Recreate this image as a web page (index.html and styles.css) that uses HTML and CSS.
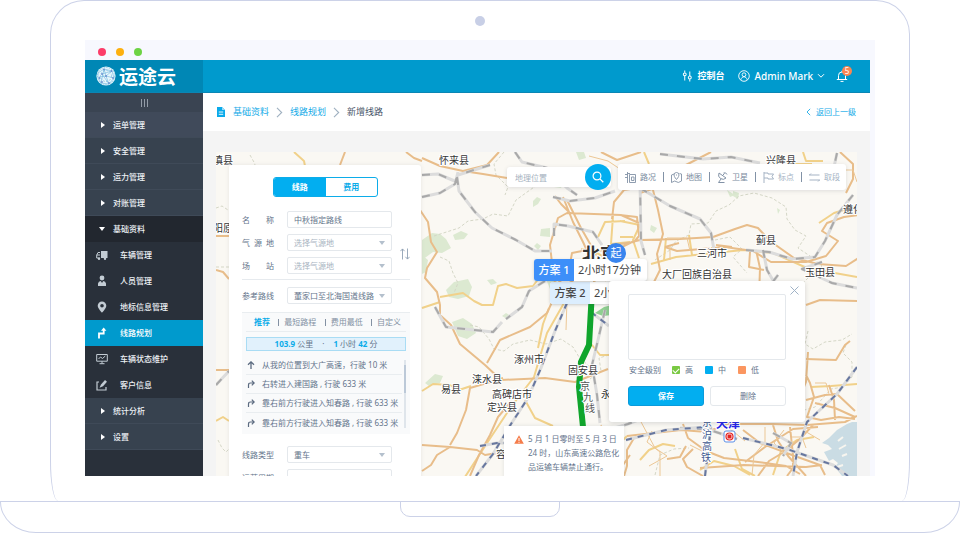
FILE: index.html
```html
<!DOCTYPE html>
<html lang="zh-CN">
<head>
<meta charset="utf-8">
<meta name="viewport" content="width=device-width, initial-scale=1">
<title>运途云 - 新增线路</title>
<link rel="stylesheet" href="styles.css">
</head>
<body>
<div class="laptop">
  <div class="lid">
    <div class="camera"></div>
    <div class="screen">
      <div class="chrome"><i class="dot red"></i><i class="dot amber"></i><i class="dot green"></i></div>
      <div class="app">
        <header class="header">
          <a class="brand" href="#">
            <svg class="brand-mark" viewBox="0 0 20 20"><circle cx="10" cy="10" r="9.6" fill="#e9f6fc"/><g fill="none" stroke="#6bb5dc" stroke-width=".6"><circle cx="10" cy="10" r="8.5" stroke-dasharray="1.5 1"/><circle cx="10" cy="10" r="5.5" stroke-dasharray="2 1.2"/><path d="M2 7l6-4 8 2 2 7-5 6-8-1-3-6zM8 3l-3 14M16 5L6 8l7 10M3 11l7-1 8 2M10 10l3 8M8 3l2 7 6-5"/></g><g fill="#6f8fd0"><circle cx="8" cy="3.4" r=".9"/><circle cx="15.5" cy="5" r=".9"/><circle cx="6" cy="8" r=".9"/><circle cx="10" cy="10" r="1"/><circle cx="3.5" cy="12" r=".9"/><circle cx="13" cy="17" r=".9"/><circle cx="17" cy="12" r=".9"/><circle cx="6" cy="16" r=".9"/></g></svg>
            <span>运途云</span>
          </a>
          <nav class="header-nav">
            <a class="console" href="#"><svg class="ic-console" viewBox="0 0 12 12"><g fill="none" stroke="#fff" stroke-width="1.1"><path d="M3 0v2.500M3 6v5M8.500 1v5M8.500 9.500V12"/><circle cx="3" cy="4.200" r="1.600"/><circle cx="8.500" cy="7.700" r="1.600"/></g></svg>控制台</a>
            <button class="user" type="button"><svg class="ic-user" viewBox="0 0 12 12"><g fill="none" stroke="#fff" stroke-width=".9"><circle cx="6" cy="6" r="5.300"/><circle cx="6" cy="4.700" r="1.900"/><path d="M2.800 9.800C3.400 7.700 4.600 6.800 6 6.800s2.600.9 3.200 3"/></g></svg><span>Admin Mark</span><svg class="ic-down" viewBox="0 0 8 6"><path d="M1 1.200l3 3 3-3" fill="none" stroke="#fff"/></svg></button>
            <button class="bell" type="button" aria-label="通知"><svg class="ic-bell" viewBox="0 0 12 12"><path d="M.8 9.500h10.400M2.500 9.500V5.500a3.500 3.500 0 0 1 7 0v4M4.500 11.400h3M6 2V.8" fill="none" stroke="#fff"/></svg><span class="badge">5</span></button>
          </nav>
        </header>
        <div class="body">
          <aside class="sidebar">
            <button class="handle" type="button" aria-label="收起菜单"><i></i><i></i><i></i></button>
            <nav class="menu">
              <a class="group first" href="#">运单管理</a>
              <a class="group" href="#">安全管理</a>
              <a class="group" href="#">运力管理</a>
              <a class="group" href="#">对账管理</a>
              <a class="group open" href="#">基础资料</a>
              <a class="sub" href="#"><svg viewBox="0 0 12 12"><path d="M5 2h6.500v7H5z" fill="#c3ccd4"/><path d="M4 3.500H2L.7 6v3H4M1 6h3" fill="none" stroke="#c3ccd4"/><circle cx="3" cy="9.800" r="1.200" fill="#c3ccd4"/><circle cx="9" cy="9.800" r="1.200" fill="#c3ccd4"/></svg>车辆管理</a>
              <a class="sub" href="#"><svg viewBox="0 0 12 12"><circle cx="6" cy="3" r="2.400" fill="#c3ccd4"/><path d="M2 11V8.500Q2.500 6.300 4.700 6L6 8l1.300-2Q9.500 6.300 10 8.500V11z" fill="#c3ccd4"/></svg>人员管理</a>
              <a class="sub" href="#"><svg viewBox="0 0 12 12"><path fill-rule="evenodd" d="M6 .5a4.300 4.300 0 0 1 4.300 4.300C10.300 7.500 6 11.700 6 11.700S1.700 7.500 1.700 4.800A4.300 4.300 0 0 1 6 .5zm0 2.500a1.800 1.800 0 1 0 0 3.600A1.800 1.800 0 0 0 6 3z" fill="#c3ccd4"/></svg>地标信息管理</a>
              <a class="sub active" href="#"><svg viewBox="0 0 12 12"><path d="M3 11.500V6.500h4.700V3" fill="none" stroke="#fff" stroke-width="1.800"/><path d="M5 3.800L7.700.5l2.700 3.300z" fill="#fff"/></svg>线路规划</a>
              <a class="sub" href="#"><svg viewBox="0 0 12 12"><path d="M.7 1.500h10.600v6.700H.7zM6 8.200v2.300M3.500 10.700h5M2.500 6l2-2 2 1.500L9.300 3" fill="none" stroke="#c3ccd4"/></svg>车辆状态维护</a>
              <a class="sub" href="#"><svg viewBox="0 0 12 12"><path d="M3 3H1v8h9V8" fill="none" stroke="#c3ccd4" stroke-width="1.200"/><path d="M3.500 8.800L5 5.500 9 1l2 1.800-4 4.500z" fill="#c3ccd4"/></svg>客户信息</a>
              <a class="group" href="#">统计分析</a>
              <a class="group" href="#">设置</a>
            </nav>
          </aside>
          <main class="content">
            <div class="crumbs">
              <svg class="ic-doc" viewBox="0 0 8 10"><path d="M0 0h5l3 3v7H0z" fill="#0aaaea"/><path d="M5 0v3h3" fill="#9bdcf7"/><path d="M1.800 5h4.400M1.800 7.300h4.400" stroke="#fff" stroke-width=".9"/></svg>
              <a href="#">基础资料</a>
              <svg class="ic-sep" viewBox="0 0 6 10"><path d="M.7.7L5 5 .7 9.300" fill="none" stroke="#9fb0c0"/></svg>
              <a href="#">线路规划</a>
              <svg class="ic-sep" viewBox="0 0 6 10"><path d="M.7.7L5 5 .7 9.300" fill="none" stroke="#9fb0c0"/></svg>
              <span>新增线路</span>
              <a class="back" href="#"><svg viewBox="0 0 5 8"><path d="M4.200.8L1 4l3.200 3.200" fill="none" stroke="#35b5ea"/></svg>返回上一级</a>
            </div>
            <section class="map">
              <svg class="map-art" viewBox="216 152 641 324" preserveAspectRatio="xMinYMin slice">
                <rect x="216" y="152" width="641" height="324" fill="#faf8f3"/>
                <g fill="#dce9d1">
                  <path d="M422 240l10-7 8 1 6 5 5 9-9 5-9-1-11 8zM446 290l8-8 14-3 4 8-3 9-11 3-9-2zM533 201l4-4 4 2-3 5-5 3zM453 235l8-4 7 3-4 5-9 1zM541 229l9-1v9l-10-1zM534 246l3-3 4 3-3 4zM487 280l6-1 4 4-6 2zM541 177l16-3 8 6-4 8-14-2-7-5zM576 152l8 0 2 6-7 2zM452 322l11-4 9 6 4 9-9 6-9-3zM425 383l10-9 8 2-3 7-11 3zM546 279l10 1 3 5-9 4zM733 191l6 2-1 6-5-3zM651 225l6 3-3 5-4-3zM727 190l8 5-5 2zM777 208l3 2-2 4zM668 170l9-2 4 3-11 3zM422 255l6 5-2 12-4 2zM502 316l4-3 5 3-4 3z"/>
                </g>
                <path d="M822 443l7-5 8-8 10-6 5-2 5 0v54h-15l-7-9 3-4-5-4-4 2-5-9 8-3-4-4z" fill="#cadce4"/>
                <path d="M838 441l5-4M839 449l7-4M842 456l5-2M837 467l6-2" stroke="#f7f5ef" stroke-width="2"/>
                <path d="M595 313l9-6 8-2v10l-9 1z" fill="#8fcf91"/>
                <g class="border">
                  <path d="M440 257l9 4 4 12 5 10-4 10M434 236l25-8 9-7 15-2 10-5 15 2 8-16 14-10 14-10 22-6 18 6M504 152l-10 12 2 11 12 12-3 8M470 325l9 2 10 12 5 10 10 2 9-7 17-4 16 4 15-5 12 8 6 10 11 10M655 260l15-10 6-9 13-6 2-11 17-1 8-12 13-6 10-9 15-3 18 5 14 9 1 12 8 11 11 6-8 12 12 8 12 10-15 13-9 9-10-2-7 8-13-3M715 240l15-3 12 12-9 8 14 16M808 331l-3 13 8 5 12-7 17-2 10-6M846 345l-3 8 9 9 0 15-9 10-12 2-16 18-14 4M655 475l5-20 14-6 15-1M216 208l6-2 6 4M216 267l14 0M218 440l4 8 4 4 3-3M250 155l5 9-3 10M609 355l-10 3 2 13-11 8"/>
                </g>
                <g class="road yellow">
                  <path d="M440 297l23-4 11 8 8 4 11 0 5-19 8-2 11 4 16-2 6-8M422 391l11-7 17 1 9 5 12-4M564 303l-17 30-13 44-23 30-20 30-28 43M525 400l10 18 18 8M651 264l25-7 67-7 30 3 34 15 50 9M811 387l20-1 26-2M422 308l18-6M620 221l20 4-7 15 6 18M613 216l-2 28 19-2M666 238l-2 22M689 235l3 20M819 223l15-10 23-7M549 308l-6 16-5 24M586 345l6 0 8 10 9 0M640 460l9-10 14-6 12 2M773 475l8-24 16-11 17-3M612 475l5-29 10-10M700 470l14-9 20 5 16 9M735 449l7 20 13 7M506 459l12-12 10-2M530 475l12-15M620 237l13 0M598 237l7-15 20-1M581 249l12 2 15 8 6 10M644 152l5 12M294 152l10 9 1 5M216 421l7-4 6 4M803 152l3 9 17 0M778 164h34"/>
                </g>
                <g class="road orange">
                  <path d="M422 158l18 8 23 5 20 3 24 4M463 171l24-6 12-13M420 210l8 12 3 20 6 10-10 16-2 10 12 14 3 13 0 10 11 10 9 19 25 21 16 15 44-2 30 4 33-13M487 363l13-23 30-13 17-14 6-13M503 378l-16 5-17 5-4 22-9 23-7 12M422 445l28 2 27 3 8 5 18-3M450 447l-13 8-6 10-9 6M510 403l-12 14-8 18-11 20-9 21M553 300l3-10-4-27-2-18 8-27 9-5 54 2 18 8M563 197l10 25 10 20 12 26M567 200l14 28 16 28M570 213l-9-9-6-8M612 219l2-17 10-12 13-2 15-2 6 24 5 24-6 20 3 16-10 20M620 215l17 2 2 19-5 6-14 2M570 264l2-11 10-2 34-1 16-8 8-2 40-1 33-2 22-8 12-4 11 3 12 13 24 17 24 6 28 2 22-14 24-6M640 193l15-5 25-20 31-16M665 247l12 4 25-2 23-2 28 4 18 11 35 0 20-6 12-15-16-10 5-8 17-6 21-3M756 250l4 18-1 30M806 305l14-5 37 1M806 359l30 1 9-15 5-4M806 375l4 8 4 14-7 20 14 3 18-3 16 2M806 400l19-5 12-1 18 17M815 403l20 5 20 9M634 438l-7 12 0 16-3 10M627 436l54-6 26 2 20-8 46 0 34 1 38-3 12-6M683 424l5 14 18 13 18 7 34 4 28 4 14 8M813 425l-13 14-16 13-15 9-11 15M790 427l3 28 0 13-6 8M743 430l17 13 32 12 28 10 5 10M693 449l-10 10 4 8 16 9M686 446l-6 11-13 2M700 468l44-3 62 2 16-2M798 402l8-20 2-30M829 385l5 15 1 20M616 475l14-20M773 425l5 16 10 15 18 20M745 462l20-15 28-18 25-2M553 290l10 11 12 1 22-4M557 284l12-1 14-8 18-6 12 5M572 259l-2 14-12 10M594 280l0 23M608 290l4 30M716 245l16 2M750 252l-1 15 15 3M665 247l14-4M840 152l13 12 0 15-7 14M216 236h13M216 270l7 2 6 7M216 370h13M345 152l-5 13M406 152l8 6 8 3M601 152l16 8 24-8"/>
                </g>
                <g class="road thin">
                  <path d="M620 169l-12-8-19-5M596 275l10 6M585 270l14 16 10 2M667 238l20 0 3 13M640 420l15 28 12 8-18 10M690 445l12 6 6 14-4 11M765 427l0 15-11 13-2 20M784 430l-10 13 12 12M815 383l11 0 3 11M803 430l17 10M792 437l10 0 4 11M720 423l14 9 11 9M585 452l10 23M592 432l10-7M652 431l-5 11 13 10 0 24M567 300l-1 30M579 286l-5 16M670 246l0 14M846 170l7 0 4 12"/>
                </g>
                <g class="rail-base"><path d="M457 177l2 14 16 21 17 16 24 12 19 11 17 0M422 197l18-4 15-9 3-12M422 175l16-1 19 8M490 165l-32 10M553 197l17 4 25-3 20-7M554 236l0-12 14 2 25 6 9 13M640 188l30 18 30 13 11 14 3 17M660 154l43 5 28-2 29 6M746 250l23 2 23 7 23-2 10-16 12-26 16-20M763 250l4 20 7 12M837 153l-3 14M822 262l-20 7 30 14 25 5M545 281l-16 10-7 16-16 12M435 307l11 20 19 2 28 3 9-10M605 310l-7 30-6 25 5 30 3 28M608 430l20-6 20-8M647 165l-7 16 1 60 4 14M680 428l27 1 30 10M773 433l18 10-8 13M778 275l-10 13 9 14M515 152l7 10 25 6 18 9M558 180l9 8 10 7M216 385l13-14"/></g>
                <g class="rail"><path d="M457 177l2 14 16 21 17 16 24 12 19 11 17 0M422 197l18-4 15-9 3-12M422 175l16-1 19 8M490 165l-32 10M553 197l17 4 25-3 20-7M554 236l0-12 14 2 25 6 9 13M640 188l30 18 30 13 11 14 3 17M660 154l43 5 28-2 29 6M746 250l23 2 23 7 23-2 10-16 12-26 16-20M763 250l4 20 7 12M837 153l-3 14M822 262l-20 7 30 14 25 5M545 281l-16 10-7 16-16 12M435 307l11 20 19 2 28 3 9-10M605 310l-7 30-6 25 5 30 3 28M608 430l20-6 20-8M647 165l-7 16 1 60 4 14M680 428l27 1 30 10M773 433l18 10-8 13M778 275l-10 13 9 14M515 152l7 10 25 6 18 9M558 180l9 8 10 7M216 385l13-14"/></g>
                <g class="rail-base"><path d="M567 303l-12 28-14 37-13 30-17 26-18 30-17 22M857 367l-20 27-15 14-15 14-10 30-4 24M480 446l17-3 20 0M626 440l40-10 40-3M743 438l44 11 46 16 15 11M591 312l18 14M705 476l6-50"/></g>
                <g class="rail blue"><path d="M567 303l-12 28-14 37-13 30-17 26-18 30-17 22M857 367l-20 27-15 14-15 14-10 30-4 24M480 446l17-3 20 0M626 440l40-10 40-3M743 438l44 11 46 16 15 11M591 312l18 14M705 476l6-50"/></g>
                <path d="M592 290l-1 19-2 36-8 17-2 25 2 20 2 20" fill="none" stroke="#10a52c" stroke-width="6"/>
                <g class="place">
                  <text x="213" y="164">滇县</text><text x="439" y="164">怀来县</text><text x="766" y="164">兴隆县</text>
                  <text x="213" y="232">阳原</text><text x="843" y="213">遵化</text><text x="756" y="244">蓟县</text>
                  <text x="697" y="257">三河市</text><text x="662" y="278">大厂回族自治县</text><text x="805" y="276">玉田县</text>
                  <text x="514" y="363">涿州市</text><text x="568" y="374">固安县</text><text x="472" y="383">涞水县</text>
                  <text x="441" y="393">易县</text><text x="492" y="398">高碑店市</text><text x="487" y="411">定兴县</text>
                  <text x="601" y="398">永</text><text x="496" y="458">容</text>
                  <text class="line" x="580" y="390">京</text><text class="line" x="583" y="401">九</text><text class="line" x="585" y="412">线</text>
                  <text class="line rail-name" x="702" y="426">京</text><text class="line rail-name" x="702" y="438">沪</text><text class="line rail-name" x="702" y="450">高</text><text class="line rail-name" x="701" y="461">铁</text>
                  <text class="capital" x="582" y="261">北京</text><text class="city" x="716" y="428">天津</text>
                </g>
                <rect x="724" y="431" width="11" height="11" rx="2" fill="#fff" stroke="#5b8fe8"/><circle cx="729.500" cy="436.500" r="3.500" fill="none" stroke="#e32222" stroke-width="1.200"/><rect x="727.500" y="434.500" width="4" height="4" fill="#e32222"/>
              </svg>

              <div class="plan plan-two"><b>方案 2</b><span>2小</span></div>
              <div class="plan plan-one"><b>方案 1</b><span>2小时17分钟</span></div>
              <div class="start">起</div>

              <form class="panel">
                <div class="segment"><button class="on" type="button">线路</button><button type="button">费用</button></div>
                <div class="ends">
                  <div class="fields">
                    <label for="name">名 称</label><input id="name" type="text" value="中秋指定路线">
                    <label for="source">气 源 地</label><span class="pick empty"><select id="source"><option>选择气源地</option></select></span>
                    <label for="station">场 站</label><span class="pick empty"><select id="station"><option>选择气源地</option></select></span>
                  </div>
                  <button class="swap" type="button" aria-label="交换起止点"><svg viewBox="0 0 10 12"><path d="M2.500 11.500V1M.4 3.200L2.500.9l2.100 2.300M7.500.5V11M5.400 8.800l2.100 2.300 2.100-2.300" fill="none" stroke="#8ea0b3" stroke-width=".9"/></svg></button>
                </div>
                <hr>
                <div class="fields"><label for="ref">参考路线</label><span class="pick"><select id="ref"><option>董家口至北海国道线路</option></select></span></div>
                <div class="routes">
                  <div class="route-tabs"><button class="on" type="button">推荐</button><button type="button">最短路程</button><button type="button">费用最低</button><button type="button">自定义</button></div>
                  <div class="summary"><b>103.9</b> 公里<i>·</i><b>1</b> 小时 <b>42</b> 分</div>
                  <div class="steps-wrap">
                    <ol class="steps">
                      <li><svg viewBox="0 0 8 8"><path d="M4 8V1M1 3.800L4 .9l3 2.900" fill="none" stroke="#5c6b80" stroke-width="1.300"/></svg>从我的位置到大广高速，行驶 10 米</li>
                      <li><svg viewBox="0 0 8 8"><path d="M1.500 8V5q0-2 2-2H7M4.800.6L7.200 3 4.800 5.400" fill="none" stroke="#5c6b80" stroke-width="1.200"/></svg>右转进入建国路 , 行驶 633 米</li>
                      <li><svg viewBox="0 0 8 8"><path d="M1.500 8V5q0-2 2-2H7M4.800.6L7.200 3 4.800 5.400" fill="none" stroke="#5c6b80" stroke-width="1.200"/></svg>靠右前方行驶进入知春路 , 行驶 633 米</li>
                      <li><svg viewBox="0 0 8 8"><path d="M1.500 8V5q0-2 2-2H7M4.800.6L7.200 3 4.800 5.400" fill="none" stroke="#5c6b80" stroke-width="1.200"/></svg>靠右前方行驶进入知春路 , 行驶 633 米</li>
                    </ol>
                    <div class="track"><i></i></div>
                  </div>
                </div>
                <div class="fields"><label for="kind">线路类型</label><span class="pick"><select id="kind"><option>重车</option></select></span>
                <label for="scope">运营周期</label><span class="pick"><select id="scope"><option></option></select></span></div>
              </form>

              <div class="topbar">
                <div class="search"><input type="text" aria-label="地理位置" placeholder="地理位置"><button type="button" aria-label="搜索"><svg viewBox="0 0 12 12"><circle cx="5" cy="5" r="3.900" fill="none" stroke="#fff" stroke-width="1.200"/><path d="M7.900 7.900l3.400 3.400" stroke="#fff" stroke-width="1.300"/></svg></button></div>
                <div class="tools">
                  <button type="button"><svg viewBox="0 0 11 11"><path d="M2.500 0v11M0 2.500h2.500M0 5.500h2.500M2.500 1.500H5M4.500 2.500h6v8h-6zM6.500 5H9v3.500H6.500z" fill="none" stroke="#8292a6" stroke-width=".9"/></svg>路况</button>
                  <button type="button"><svg viewBox="0 0 11 11"><path d="M3 2L.5 3v7.500L3.700 9l3.600 1.500 3.200-1.500V2L8.500 1.500M5.500 7.500S3 4.800 3 3a2.500 2.500 0 0 1 5 0c0 1.800-2.500 4.500-2.500 4.500zM5.500 2.500v1" fill="none" stroke="#8292a6" stroke-width=".9"/></svg>地图</button>
                  <button type="button"><svg viewBox="0 0 11 11"><path d="M2 1Q.5 4.500 3.500 6.500T9 6zM5 4l2.500-2.500M6.500 1q2.500-1 3.500 1.500M4 7l-2.500 3.500h6" fill="none" stroke="#8292a6"/></svg>卫星</button>
                  <button class="soft" type="button"><svg viewBox="0 0 11 11"><path d="M1 0v11M1 1h4v1h5.500L9 4.500 10.500 7H5V6H1" fill="none" stroke="#a5b3c4"/></svg>标点</button>
                  <button class="soft" type="button"><svg viewBox="0 0 11 11"><path d="M0 3h10.500M.5 8H11M2 1.500L.5 3M9 9.500L10.500 8" fill="none" stroke="#a5b3c4"/></svg>取段</button>
                </div>
              </div>

              <div class="notice"><svg viewBox="0 0 10 9"><path d="M5 .3L9.800 8.700H.2z" fill="#f57c4a"/><path d="M5 3v3M5 6.800v1" stroke="#fff"/></svg><p>5 月 1 日零时至 5 月 3 日<br>24 时，山东高速公路危化<br>品运输车辆禁止通行。</p></div>

              <form class="popup">
                <button class="close" type="button" aria-label="关闭"><svg viewBox="0 0 9 9"><path d="M.5.5l8 8M8.500.5l-8 8" fill="none" stroke="#9fb2c6"/></svg></button>
                <textarea aria-label="备注"></textarea>
                <div class="levels" role="group" aria-labelledby="level-title"><span id="level-title">安全级别</span>
                  <label><input class="high" type="checkbox" checked>高</label>
                  <label><input class="mid" type="checkbox">中</label>
                  <label><input class="low" type="checkbox">低</label>
                </div>
                <div class="actions"><button class="save" type="button">保存</button><button class="delete" type="button">删除</button></div>
              </form>
            </section>
          </main>
        </div>
      </div>
    </div>
  </div>
  <div class="base"><div class="notch"></div></div>
</div>
</body>
</html>
```

FILE: styles.css
```css
* { box-sizing: border-box; }
body {
  margin: 0;
  background: #fff;
  color: #64748b;
  font: 8px/14px "Noto Sans", "Noto Sans CJK SC", sans-serif;
}
button, input, select, textarea {
  margin: 0;
  padding: 0;
  border: 0;
  background: none;
  color: inherit;
  font: inherit;
}
a { color: inherit; text-decoration: none; }
svg { display: block; flex: none; }
p, ol { margin: 0; padding: 0; list-style: none; }

/* Device frame */
.laptop { display: flex; flex-direction: column; height: 100vh; min-height: 500px; }
.lid {
  display: flex;
  flex: 1;
  flex-direction: column;
  min-height: 0;
  margin: 0 50px;
  padding: 0 34px 25px;
  border: 1px solid #ccd2e8;
  border-bottom: 0;
  border-radius: 34px 34px 8px 8px / 34px 34px 40px 40px;
}
.camera { width: 10px; height: 10px; margin: 15px auto 14px; border-radius: 50%; background: #c8cfe6; }
.base { height: 32px; border: 1px solid #ccd2e8; border-radius: 0 0 36px 36px / 0 0 31px 31px; }
.notch { width: 160px; height: 16px; margin: -1px auto 0; border: 1px solid #ccd2e8; border-radius: 0 0 10px 10px; }

.screen { display: flex; flex: 1; flex-direction: column; min-height: 0; background: #f7f8fe; overflow: hidden; }
.chrome { display: flex; flex: none; gap: 10px; height: 20px; padding: 8px 13px 0; }
.dot { width: 8px; height: 8px; border-radius: 50%; }
.red { background: #fc3c69; }
.amber { background: #fdb00f; }
.green { background: #6dd344; }

.app { display: flex; flex: 1; flex-direction: column; min-height: 0; margin-right: 5px; }

/* Header */
.header { display: flex; flex: none; height: 33px; border-bottom: 1px solid #0b86b4; background: #009acd; color: #fff; }
.brand { display: flex; align-items: center; width: 118px; padding-left: 11px; gap: 3px; background: #0087b5; font: bold 19px/30px "Noto Sans CJK SC", sans-serif; }
.brand-mark { width: 20px; height: 20px; }
.header-nav { display: flex; flex: 1; align-items: center; justify-content: flex-end; padding-right: 22px; font-size: 10px; }
.header-nav > * { display: flex; align-items: center; }
.console { gap: 4px; margin-right: 14px; font-size: 9px; font-weight: bold; }
.ic-console, .ic-user, .ic-bell { width: 12px; height: 12px; }
.console { color: #fff; }
.user { gap: 4px; margin-right: 11px; font-weight: 500; }
.user .ic-down { width: 8px; height: 6px; }
.header-nav .ic-console { width: 11px; }
.header-nav { padding-right: 22px; }
.bell { position: relative; }
.badge { position: absolute; top: -4px; left: 6px; width: 10px; height: 10px; border-radius: 50%; background: #f98552; font-size: 8px; line-height: 10px; text-align: center; }

.body { display: flex; flex: 1; min-height: 0; }

/* Sidebar */
.sidebar { flex: none; width: 118px; background: #29303a; color: #edf1f5; font-weight: 600; overflow: hidden; }
.handle { display: flex; align-items: center; justify-content: center; gap: 2px; width: 100%; height: 19px; background: #3a4452; }
.handle i { width: 1px; height: 8px; background: #939ca8; }
.menu a { display: flex; align-items: center; height: 26px; }
.group { padding-left: 16px; border-bottom: 1px solid #3f4a58; background: #37424f; font-weight: 500; }
.menu .sub { font-weight: 500; }
.group::before { width: 0; margin-right: 8px; border: 3px solid transparent; border-right-width: 0; border-left: 4px solid #fff; content: ""; }
.group.first { background: #404a5a; }
.group.open { padding-left: 14px; border-color: #22272f; background: #22272f; }
.group.open::before { margin-right: 8px; border: 3px solid transparent; border-top: 4px solid #fff; border-bottom: 0; }
.sub { gap: 12px; padding-left: 11px; }
.sub svg { width: 12px; height: 12px; }
.sub.active { background: #009acd; color: #fff; }

/* Page head */
.content { display: flex; flex: 1; flex-direction: column; min-width: 0; background: #f4f4f4; }
.crumbs { display: flex; flex: none; align-items: center; gap: 7px; height: 38px; padding: 0 14px; background: #fff; color: #475569; font-size: 9px; }
.crumbs a { color: #16abe8; }
.ic-doc { width: 8px; height: 10px; margin-right: 1px; }
.ic-sep { width: 7px; height: 11px; }
.crumbs .back { display: flex; align-items: center; gap: 5px; margin-left: auto; font-size: 8px; }
.back svg { width: 5px; height: 8px; }

/* Map canvas */
.map { position: relative; flex: 1; min-height: 0; margin: 21px 13px 0; overflow: hidden; }
.map-art { width: 100%; height: 100%; }
.road, .rail, .rail-base, .border { fill: none; stroke-linejoin: round; }
.orange { stroke: #e8bd8a; stroke-width: 2; }
.yellow { stroke: #f1d18a; stroke-width: 2; }
.thin { stroke: #ecc795; stroke-width: 1; }
.border { stroke: #d5d7c7; stroke-width: 1; stroke-dasharray: 3 2; }
.rail-base { stroke: #dcdcdc; stroke-width: 3; }
.rail { stroke: #a9a9a9; stroke-width: 2; stroke-dasharray: 8 9; }
.rail.blue { stroke: #67779f; stroke-width: 2; stroke-dasharray: 6 6; }
.place { fill: #333; stroke: #fff; stroke-width: 2px; paint-order: stroke; font: 10px "Noto Sans CJK SC", sans-serif; }
.place .line { fill: #555; }
.place .rail-name { fill: #3e5790; }
.place .capital { font-size: 18px; font-weight: bold; }
.place .city { fill: #2626e8; font-size: 12px; font-weight: bold; }

.plan { position: absolute; display: flex; height: 22px; border-radius: 3px; background: #fff; box-shadow: 0 1px 3px rgba(60, 70, 80, .25); color: #444; font-size: 11px; line-height: 21px; white-space: nowrap; }
.plan b { width: 40px; border-radius: 3px 0 0 3px; font-weight: 500; text-align: center; }
.plan span { padding: 0 6px 0 4px; }
.plan-one { top: 107px; left: 318px; }
.plan-one b { background: #3d8ff9; color: #fff; }
.plan-two { top: 130px; left: 334px; }
.plan-two b { background: #dceefe; }
.start { position: absolute; top: 91px; left: 390px; width: 20px; height: 20px; border-radius: 50%; background: #3985ee; color: #fff; font-size: 11px; line-height: 20px; text-align: center; }

/* Route form */
.panel { position: absolute; top: 13px; left: 13px; width: 192px; padding: 12px 11px 0 13px; border-radius: 3px; background: #fff; box-shadow: 0 0 4px rgba(80, 90, 100, .12); }
.segment { display: flex; width: 105px; height: 20px; margin: 0 auto 14px 31px; border: 1px solid #0cace9; border-radius: 3px; overflow: hidden; }
.segment button { flex: 1; color: #0cace9; font-weight: bold; }
.segment .on { background: #02aef0; color: #fff; }
.ends { display: flex; align-items: flex-end; justify-content: space-between; }
.fields { display: grid; grid-template-columns: 32px 105px; gap: 6px 13px; align-items: center; }
.fields label { text-align-last: justify; }
.fields input, .pick select { width: 100%; height: 17px; padding: 0 6px; border: 1px solid #e4e8ec; border-radius: 2px; background: #fff; }
.fields input { display: block; }
.pick { position: relative; display: block; height: 17px; }
.pick select { display: block; padding-right: 14px; appearance: none; }
.pick::after { position: absolute; top: 7px; right: 7px; border: 3px solid transparent; border-top: 4px solid #b4c0cd; border-bottom: 0; content: ""; }
.pick.empty { color: #a9b4c1; }
.swap { margin-bottom: 14px; }
.swap svg { width: 10px; height: 12px; }
.panel hr { height: 1px; margin: 5px 0 7px; border: 0; background: #e6eaee; }
.routes { height: 122px; margin: 8px 0 12px; padding: 0 4px; border-top: 1px solid #e9edf0; background: #f9fafb; }
.route-tabs { display: flex; justify-content: space-between; height: 19px; padding: 0 5px 0 8px; border-bottom: 1px solid #e9edf0; color: #8391a3; line-height: 18px; }
.route-tabs button + button { position: relative; }
.route-tabs button + button::before { position: absolute; top: 6px; left: -6px; width: 1px; height: 7px; background: #8391a3; content: ""; }
.route-tabs .on { color: #0cace9; font-weight: bold; }
.summary { height: 14px; margin-top: 5px; border: 1px solid #a9dcf4; background: #e1f1fc; line-height: 12px; text-align: center; }
.summary b { color: #0cace9; }
.summary i { margin: 0 9px; font-style: normal; }
.steps-wrap { display: flex; margin-top: 5px; }
.steps { flex: 1; white-space: nowrap; }
.steps li { display: flex; align-items: center; gap: 7px; height: 19px; padding-left: 1px; border-bottom: 1px solid #e9edf0; }
.steps li:last-child { border: 0; }
.steps svg { width: 8px; height: 8px; }
.track { flex: none; width: 2px; height: 68px; margin: 4px 0 0 2px; background: #dfe5eb; }
.track i { display: block; height: 28px; margin-top: 5px; background: #bcc9d8; }

/* Search and layer tools */
.topbar { position: absolute; top: 12px; right: 11px; display: flex; align-items: center; gap: 7px; }
.search { display: flex; align-items: center; height: 20px; border-radius: 3px; background: #fff; box-shadow: 0 1px 4px rgba(60, 70, 80, .15); }
.search input { width: 78px; height: 20px; padding-left: 8px; }
.search input::placeholder { color: #a5b1be; }
.search button { display: flex; align-items: center; justify-content: center; width: 26px; height: 26px; border-radius: 50%; background: #02aef0; }
.search svg { width: 12px; height: 12px; }
.tools { display: flex; align-items: center; height: 26px; padding: 0 6px 0 7px; border-radius: 3px; background: #fff; box-shadow: 0 1px 4px rgba(60, 70, 80, .15); }
.tools button { display: flex; align-items: center; gap: 4px; color: #7a8a9e; line-height: 10px; }
.tools button + button { margin-left: 7px; }
.tools button + button::before { width: 1px; height: 10px; margin-right: 3px; background: #8292a6; content: ""; }
.tools svg { width: 11px; height: 11px; }
.tools .soft { color: #a5b3c4; }

/* Traffic notice */
.notice { position: absolute; top: 274px; left: 288px; display: flex; gap: 4px; padding: 6px 5px 8px 10px; background: #fff; box-shadow: 0 0 4px rgba(80, 90, 100, .15); white-space: nowrap; }
.notice svg { width: 10px; height: 9px; margin-top: 3px; }

/* Segment popup */
.popup { position: absolute; top: 129px; left: 393px; width: 196px; padding: 13px 19px 16px; border-radius: 3px; background: #fff; box-shadow: 0 1px 5px rgba(60, 70, 80, .2); }
.close { position: absolute; top: 5px; right: 6px; }
.close svg { width: 9px; height: 9px; }
.popup textarea { display: block; width: 100%; height: 66px; border: 1px solid #e4e8ec; border-radius: 2px; resize: none; }
.levels { display: flex; height: 20px; }
.levels > span { margin: 3px 11px 0 1px; }
.levels label { display: flex; align-items: center; gap: 5px; margin-right: 12px; }
.levels input { width: 8px; height: 8px; border-radius: 1px; appearance: none; }
.high { background: #7ac943; }
.high:checked::after { display: block; width: 5px; height: 3px; margin: 2px 1px; border: solid #fff; border-width: 0 0 1px 1px; transform: rotate(-45deg); content: ""; }
.mid { background: #02aef0; }
.low { background: #fb9660; }
.actions { display: flex; gap: 6px; margin-top: 6px; }
.actions button { flex: 1; height: 20px; border: 1px solid #e4e8ec; border-radius: 3px; }
.actions .save { border-color: #0a9bdb; background: #02aef0; color: #fff; font-weight: bold; }
```
